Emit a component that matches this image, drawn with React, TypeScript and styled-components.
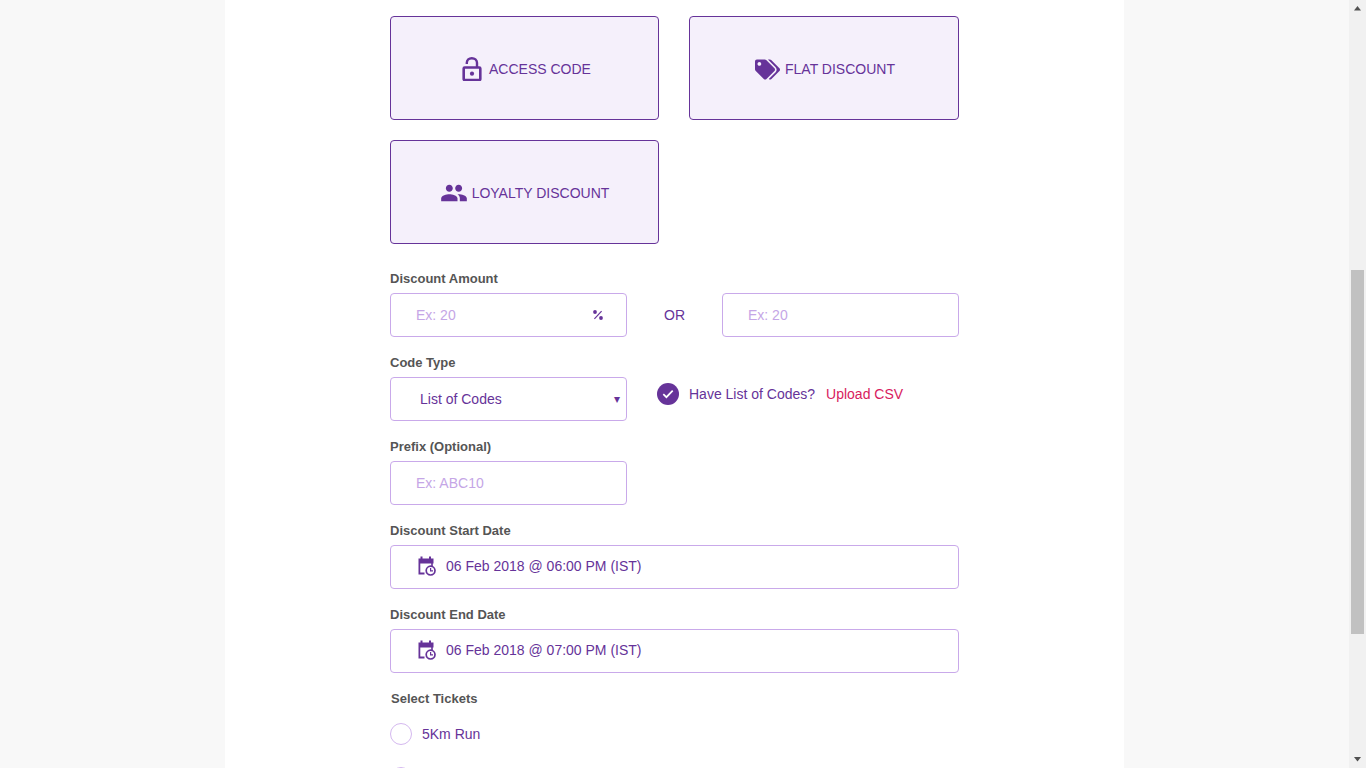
import styled, { createGlobalStyle } from "styled-components";
import { FaTags } from "react-icons/fa";
import { MdPeople } from "react-icons/md";

const GlobalStyle = createGlobalStyle`
  html, body {
    margin: 0;
    padding: 0;
    height: 100%;
    overflow: hidden;
  }
  body {
    background: #f8f8f8;
    font-family: "Liberation Sans", Arial, sans-serif;
  }
  * {
    box-sizing: border-box;
  }
`;

const purple = "#663399";

const LockIcon = () => (
  <svg width="24" height="24" viewBox="0 0 24 24" fill="none">
    <rect x="3.7" y="10.5" width="16.6" height="12.5" rx="1" stroke={purple} strokeWidth="2.6" />
    <path d="M6.8 7V5.8C6.8 3 9 1.2 11.8 1.2S17 3 17 5.8V10.5" stroke={purple} strokeWidth="2.4" />
    <circle cx="12" cy="16.7" r="2.1" fill={purple} />
  </svg>
);

const CalendarIcon = () => (
  <svg width="18" height="20" viewBox="0 0 18 20" fill="none">
    <path d="M0.5 2.5H15.5V7.5H2.3V16.5H6.5V18.5H0.5Z" fill={purple} />
    <path d="M3.5 0.5V3M12 0.5V3" stroke={purple} strokeWidth="2" />
    <path d="M14 7V10" stroke={purple} strokeWidth="1.6" />
    <circle cx="12.6" cy="14.6" r="4.4" fill="#fff" stroke={purple} strokeWidth="1.7" />
    <path d="M12.6 12V14.8H15" stroke={purple} strokeWidth="1.2" />
  </svg>
);

const PercentIcon = () => (
  <svg width="10" height="10" viewBox="0 0 10 10" fill="none">
    <circle cx="2" cy="2" r="1.9" fill={purple} />
    <circle cx="8" cy="8" r="1.9" fill={purple} />
    <path d="M8.6 1.2L1.4 8.8" stroke={purple} strokeWidth="1.2" />
  </svg>
);

const CheckIcon = () => (
  <svg width="12" height="10" viewBox="0 0 12 10" fill="none">
    <path d="M1.3 5.2L4.4 8.2L10.7 1.6" stroke="#fff" strokeWidth="1.7" />
  </svg>
);

const ScrollArrow = ({ down }: { down?: boolean }) => (
  <svg width="17" height="17" viewBox="0 0 17 17">
    <path d={down ? "M5 6H12L8.5 10.5Z" : "M8.5 6L12 10.5H5Z"} fill="#505050" />
  </svg>
);

const App = () => {
  return (
    <>
      <GlobalStyle />
      <Viewport>
        <Page>
          <Panel>
            <Form>
              <CardGrid>
                <Card>
                  <LockIcon />
                  ACCESS CODE
                </Card>
                <Card>
                  <FaTags size={25} />
                  FLAT DISCOUNT
                </Card>
                <Card $tight>
                  <MdPeople size={28} />
                  LOYALTY DISCOUNT
                </Card>
              </CardGrid>

              <Field>
                <Label>Discount Amount</Label>
                <AmountRow>
                  <InputWrap>
                    <TextInput placeholder="Ex: 20" />
                    <PercentMark>
                      <PercentIcon />
                    </PercentMark>
                  </InputWrap>
                  <OrText>OR</OrText>
                  <TextInput placeholder="Ex: 20" />
                </AmountRow>
              </Field>

              <CodeRow>
                <HalfField>
                  <Label>Code Type</Label>
                  <InputWrap>
                    <Select defaultValue="list">
                      <option value="list">List of Codes</option>
                    </Select>
                    <SelectArrow>▾</SelectArrow>
                  </InputWrap>
                </HalfField>
                <CheckRow>
                  <CheckCircle>
                    <CheckIcon />
                  </CheckCircle>
                  <CheckText>Have List of Codes?</CheckText>
                  <UploadLink>Upload CSV</UploadLink>
                </CheckRow>
              </CodeRow>

              <HalfField>
                <Label>Prefix (Optional)</Label>
                <TextInput placeholder="Ex: ABC10" />
              </HalfField>

              <Field>
                <Label>Discount Start Date</Label>
                <DateBox>
                  <CalendarIcon />
                  06 Feb 2018 @ 06:00 PM (IST)
                </DateBox>
              </Field>

              <Field>
                <Label>Discount End Date</Label>
                <DateBox>
                  <CalendarIcon />
                  06 Feb 2018 @ 07:00 PM (IST)
                </DateBox>
              </Field>

              <TicketsLabel>Select Tickets</TicketsLabel>
              <RadioRow>
                <Radio />
                5Km Run
              </RadioRow>
              <RadioRow>
                <Radio />
              </RadioRow>
            </Form>
          </Panel>
        </Page>
        <Scrollbar>
          <ScrollArrow />
          <ScrollTrack>
            <ScrollThumb />
          </ScrollTrack>
          <ScrollArrow down />
        </Scrollbar>
      </Viewport>
    </>
  );
};

export default App;

const Viewport = styled.div`
  display: flex;
  height: 768px;
  overflow: hidden;
`;

const Page = styled.div`
  flex: 1;
  padding-left: 225px;
  overflow: hidden;
`;

const Panel = styled.div`
  width: 899px;
  min-height: 100%;
  background: #fff;
  padding: 16px 0 0 165px;
`;

const Form = styled.div`
  width: 569px;
`;

const CardGrid = styled.div`
  display: grid;
  grid-template-columns: 269px 270px;
  grid-auto-rows: 104px;
  column-gap: 30px;
  row-gap: 20px;
  margin-bottom: 26px;
`;

const Card = styled.div<{ $tight?: boolean }>`
  display: flex;
  align-items: center;
  justify-content: center;
  gap: ${(p) => (p.$tight ? "4px" : "5px")};
  padding: 2px 0 0 ${(p) => (p.$tight ? "0" : "2px")};
  background: #f5f0fb;
  border: 1px solid ${purple};
  border-radius: 4px;
  color: ${purple};
  font-size: 14px;
`;

const Field = styled.div`
  margin-bottom: 17px;
`;

const HalfField = styled(Field)`
  width: 237px;
`;

const Label = styled.div`
  height: 16px;
  padding-top: 1px;
  line-height: 16px;
  margin-bottom: 7px;
  font-size: 13px;
  font-weight: 700;
  color: #555;
`;

const AmountRow = styled.div`
  display: grid;
  grid-template-columns: 237px 1fr 237px;
  align-items: center;
`;

const InputWrap = styled.div`
  position: relative;
`;

const TextInput = styled.input`
  display: block;
  width: 100%;
  height: 44px;
  padding: 0 40px 0 25px;
  background: #fff;
  border: 1px solid #c9a9ea;
  border-radius: 4px;
  outline: none;
  font-family: inherit;
  font-size: 14px;
  color: ${purple};
  &::placeholder {
    color: #c5a6e6;
    opacity: 1;
  }
`;

const PercentMark = styled.span`
  position: absolute;
  top: 17px;
  right: 24px;
  display: flex;
`;

const OrText = styled.div`
  text-align: center;
  font-size: 14px;
  color: ${purple};
`;

const CodeRow = styled.div`
  display: flex;
  column-gap: 30px;
`;

const Select = styled.select`
  display: block;
  width: 100%;
  height: 44px;
  padding: 0 0 0 29px;
  appearance: none;
  background: #fff;
  border: 1px solid #c9a9ea;
  border-radius: 4px;
  outline: none;
  font-family: inherit;
  font-size: 14px;
  color: ${purple};
`;

const SelectArrow = styled.span`
  position: absolute;
  top: 14px;
  right: 7px;
  font-size: 12px;
  line-height: 16px;
  color: ${purple};
  pointer-events: none;
`;

const CheckRow = styled.div`
  display: flex;
  align-items: center;
  height: 22px;
  margin-top: 29px;
  font-size: 14px;
`;

const CheckCircle = styled.span`
  display: flex;
  align-items: center;
  justify-content: center;
  width: 22px;
  height: 22px;
  margin-right: 10px;
  border-radius: 50%;
  background: ${purple};
`;

const CheckText = styled.span`
  color: ${purple};
  margin-right: 11px;
`;

const UploadLink = styled.a`
  color: #d81b60;
`;

const DateBox = styled.div`
  display: flex;
  align-items: center;
  gap: 10px;
  height: 44px;
  padding: 0 0 2px 27px;
  background: #fff;
  border: 1px solid #c9a9ea;
  border-radius: 4px;
  font-size: 14px;
  color: ${purple};
`;

const TicketsLabel = styled(Label)`
  margin: 0 0 17px 1px;
`;

const RadioRow = styled.div`
  display: flex;
  align-items: center;
  gap: 10px;
  height: 22px;
  margin-bottom: 22px;
  font-size: 14px;
  color: ${purple};
`;

const Radio = styled.span`
  width: 22px;
  height: 22px;
  border: 1px solid #d4b8ef;
  border-radius: 50%;
`;

const Scrollbar = styled.div`
  display: flex;
  flex-direction: column;
  flex: 0 0 17px;
  height: 768px;
  background: #f1f1f1;
`;

const ScrollTrack = styled.div`
  flex: 1;
  padding: 253px 2px 0;
`;

const ScrollThumb = styled.div`
  height: 364px;
  background: #c1c1c1;
`;
